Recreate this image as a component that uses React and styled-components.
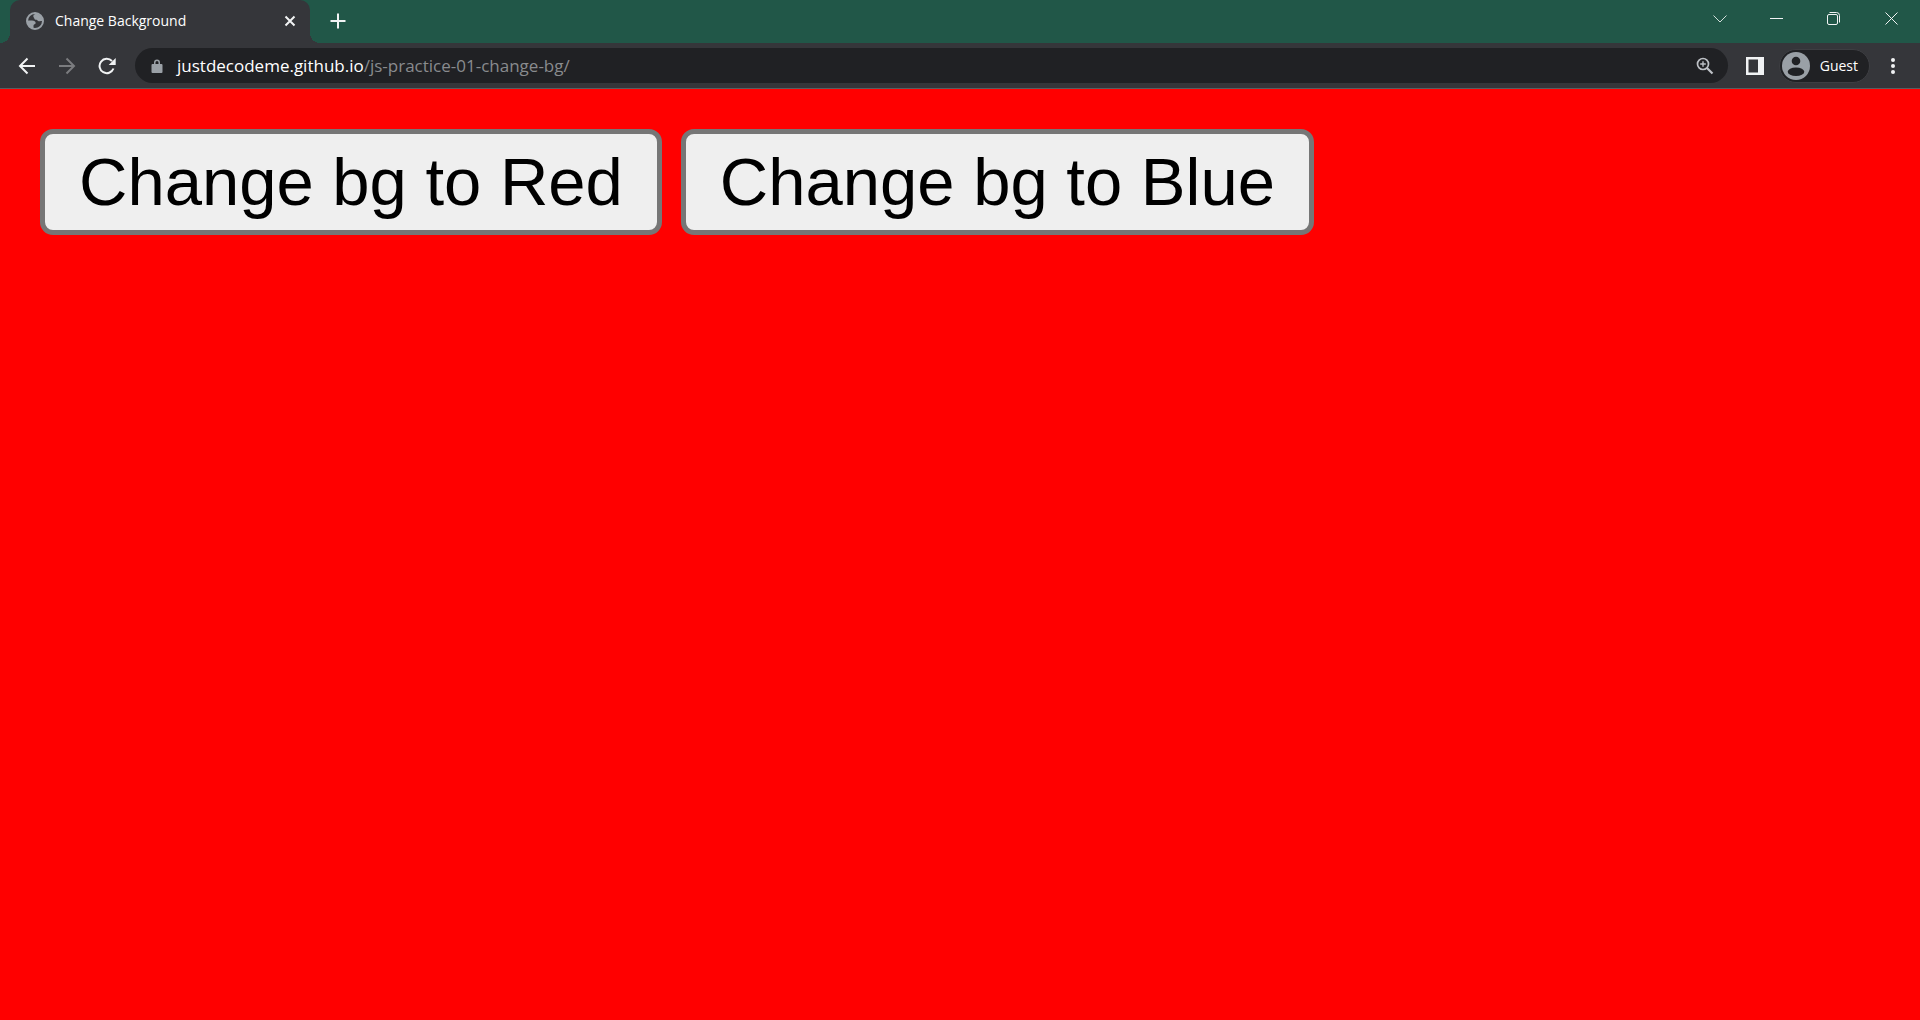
import React, { useState } from "react";
import styled, { createGlobalStyle } from "styled-components";

const GlobalStyle = createGlobalStyle`
  * { box-sizing: border-box; }
  html, body { margin: 0; height: 100%; }
  #root { height: 100%; }
  button { font-family: inherit; }
`;

const uiFont = `"Segoe UI", "Open Sans", "Noto Sans", sans-serif`;

const Window = styled.div`
  display: flex;
  flex-direction: column;
  min-height: 100%;
  font-family: ${uiFont};
`;

const TabStrip = styled.header`
  display: flex;
  align-items: stretch;
  height: 43px;
  padding-left: 10px;
  background: #215748;
`;

const Tab = styled.div`
  position: relative;
  display: flex;
  align-items: center;
  gap: 11px;
  width: 300px;
  padding: 0 10px 2px 16px;
  border-radius: 10px 10px 0 0;
  background: #35363a;
  color: #ffffff;

  &::before,
  &::after {
    content: "";
    position: absolute;
    bottom: 0;
    width: 10px;
    height: 10px;
  }
  &::before {
    right: 100%;
    background: radial-gradient(circle at 0 0, transparent 10px, #35363a 10px);
  }
  &::after {
    left: 100%;
    background: radial-gradient(circle at 100% 0, transparent 10px, #35363a 10px);
  }
`;

const TabTitle = styled.span`
  flex: 1;
  font-size: 14px;
  line-height: 20px;
  white-space: nowrap;
`;

const IconButton = styled.button`
  display: flex;
  align-items: center;
  justify-content: center;
  flex: none;
  width: ${(p) => p.$width || 40}px;
  height: ${(p) => p.$height || 35}px;
  padding: 0;
  border: 0;
  background: none;
  color: ${(p) => p.$color || "#f1f3f4"};
`;

const NewTabSlot = styled.div`
  display: flex;
  align-items: center;
  padding: 0 0 2px 13px;
`;

const WindowControls = styled.div`
  display: flex;
  margin-left: auto;
`;

const Toolbar = styled.nav`
  display: flex;
  align-items: center;
  height: 46px;
  padding: 0 7px;
  border-bottom: 1px solid #5b5d61;
  background: #35363a;
`;

const AddressBar = styled.div`
  display: flex;
  align-items: center;
  flex: 1;
  height: 35px;
  margin: 0 7px 0 8px;
  padding: 0 3px 0 2px;
  border-radius: 18px;
  background: #202124;
`;

const Address = styled.a`
  flex: 1;
  color: #898b8e;
  font-size: 17px;
  line-height: 24px;
  text-decoration: none;
  white-space: nowrap;
`;

const Host = styled.span`
  color: #ffffff;
`;

const Profile = styled.button`
  display: flex;
  align-items: center;
  gap: 10px;
  height: 34px;
  margin: 0 3px 0 4px;
  padding: 0 11px 0 2px;
  border: 1px solid #3d3e42;
  border-radius: 17px;
  background: #202124;
  color: #ffffff;
  font-size: 14px;
  line-height: 20px;
`;

const Page = styled.main`
  display: flex;
  flex: 1;
  flex-wrap: wrap;
  align-content: flex-start;
  gap: 19px;
  padding: 40px;
  background: ${(p) => p.$color};
`;

const ColorButton = styled.button`
  padding: 10px 34px;
  border: 5px solid #767676;
  border-radius: 13px;
  background: #efefef;
  color: #000000;
  font-size: 67px;
  line-height: 76px;
  white-space: nowrap;

  && { font-family: Arial, "Liberation Sans", sans-serif; }
`;

const Glyph = ({ size = 24, box = size, children }) => (
  <svg width={size} height={size} viewBox={`0 0 ${box} ${box}`} fill="currentColor" aria-hidden="true">
    {children}
  </svg>
);

const Line = ({ d, size, width = 1 }) => (
  <svg width={size} height={size} viewBox={`0 0 ${size} ${size}`} fill="none" stroke="currentColor" strokeWidth={width} aria-hidden="true">
    <path d={d} />
  </svg>
);

const Globe = () => (
  <svg width="18" height="18" viewBox="0 0 18 18" aria-hidden="true">
    <circle cx="9" cy="9" r="8" fill="none" stroke="#9aa0a6" strokeWidth="2" />
    <path d="M11 1.5C8.500 2 7.300 3 7.300 4.200c0 1.100 1 1.300 1 2.300 0 1 1 1.300 2.200 1.300 1 0 1 1.500 2.300 1.500 1 0 1.700-.5 4.200-.3L15 4z" fill="#9aa0a6" />
    <path d="M1 8.500h5c2.300 0 3.700 1 3.700 2.500 0 1.300-2.200 1-2.200 2.500V17C3 16 1 13 1 8.500z" fill="#9aa0a6" />
  </svg>
);

export default function App() {
  const [color, setColor] = useState("red");
  return (
    <Window>
      <GlobalStyle />
      <TabStrip>
        <Tab>
          <Globe />
          <TabTitle>Change Background</TabTitle>
          <IconButton $width={20} $height={20} aria-label="Close tab">
            <Line size={12} width={2} d="M1.500 1.500l9 9M10.500 1.500l-9 9" />
          </IconButton>
        </Tab>
        <NewTabSlot>
          <IconButton $width={30} $height={30} aria-label="New tab">
            <Line size={16} width={2} d="M8 .5v15M.5 8h15" />
          </IconButton>
        </NewTabSlot>
        <WindowControls>
          <IconButton $width={57} $height={37} $color="#d3dfdb" aria-label="Search tabs">
            <Line size={14} d="M.5 3.500L7 10l6.500-6.500" />
          </IconButton>
          <IconButton $width={57} $height={37} aria-label="Minimize">
            <Line size={13} d="M0 6.500h13" />
          </IconButton>
          <IconButton $width={57} $height={37} aria-label="Restore">
            <svg width="13" height="13" viewBox="0 0 13 13" fill="none" stroke="currentColor" aria-hidden="true">
              <rect x=".5" y="2.500" width="10" height="10" rx="1.500" />
              <path d="M2.500.5h7a3 3 0 0 1 3 3v7" />
            </svg>
          </IconButton>
          <IconButton $width={58} $height={37} aria-label="Close window">
            <Line size={13} d="M.5.5l12 12M12.500.5l-12 12" />
          </IconButton>
        </WindowControls>
      </TabStrip>
      <Toolbar>
        <IconButton aria-label="Back">
          <Line size={18} width={2} d="M17 9H2M9.500 1.500L2 9l7.500 7.500" />
        </IconButton>
        <IconButton $color="#7b7c7f" aria-label="Forward">
          <Line size={18} width={2} d="M1 9h15M8.500 1.500L16 9l-7.500 7.500" />
        </IconButton>
        <IconButton aria-label="Reload">
          <svg width="18" height="18" viewBox="0 0 18 18" aria-hidden="true">
            <path d="M15.500 11.500A7.200 7.200 0 1 1 14 4" fill="none" stroke="currentColor" strokeWidth="2" />
            <path d="M17.700 1v7h-7z" fill="currentColor" />
          </svg>
        </IconButton>
        <AddressBar>
          <IconButton $color="#9aa0a6" aria-label="Site information">
            <Glyph size={14}>
              <path d="M2.500 5H4V3.500a3 3 0 0 1 6 0V5h1.500a1 1 0 0 1 1 1v7a1 1 0 0 1-1 1h-9a1 1 0 0 1-1-1V6a1 1 0 0 1 1-1zm3 0h3V3.500a1.500 1.500 0 0 0-3 0z" />
            </Glyph>
          </IconButton>
          <Address href="#"><Host>justdecodeme.github.io</Host>/js-practice-01-change-bg/</Address>
          <IconButton $color="#bdc1c6" aria-label="Zoom">
            <svg width="18" height="18" viewBox="0 0 18 18" fill="none" stroke="currentColor" aria-hidden="true">
              <circle cx="7" cy="7" r="5.500" strokeWidth="1.700" />
              <path d="M11 11l5.500 5.500" strokeWidth="2.200" />
              <path d="M7 4.200v5.600M4.200 7h5.600" strokeWidth="1.400" />
            </svg>
          </IconButton>
        </AddressBar>
        <IconButton aria-label="Side panel">
          <Glyph size={18}><path fillRule="evenodd" d="M0 0h18v18H0zM2.500 2.500H12v13H2.500z" /></Glyph>
        </IconButton>
        <Profile>
          <svg width="28" height="28" viewBox="0 0 28 28" aria-hidden="true">
            <circle cx="14" cy="14" r="14" fill="#9aa0a6" />
            <circle cx="14" cy="9" r="4.300" fill="#202124" />
            <ellipse cx="14" cy="19.700" rx="8.300" ry="4.300" fill="#202124" />
          </svg>
          Guest
        </Profile>
        <IconButton aria-label="Menu">
          <Glyph size={24}>
            <circle cx="12" cy="6" r="2" /><circle cx="12" cy="12" r="2" /><circle cx="12" cy="18" r="2" />
          </Glyph>
        </IconButton>
      </Toolbar>
      <Page $color={color}>
        <ColorButton onClick={() => setColor("red")}>Change bg to Red</ColorButton>
        <ColorButton onClick={() => setColor("blue")}>Change bg to Blue</ColorButton>
      </Page>
    </Window>
  );
}
